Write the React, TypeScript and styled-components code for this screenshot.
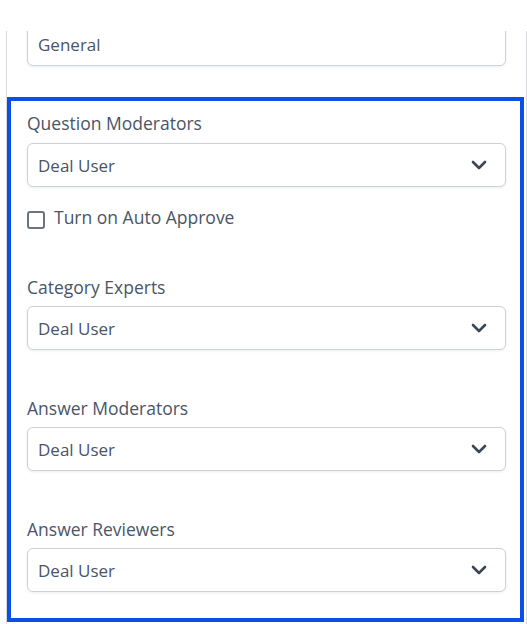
import React from 'react';
import styled, { createGlobalStyle } from 'styled-components';

const GlobalStyle = createGlobalStyle`
  html, body {
    margin: 0;
    padding: 0;
    background: #fff;
  }

  body {
    font-family: 'Open Sans', 'Noto Sans', sans-serif;
    color: #465163;
  }
`;

const TopSpacer = styled.div`
  height: 31px;
  background: #fff;
`;

const Panel = styled.div`
  margin-left: 6px;
  width: 521px;
  box-sizing: border-box;
  border-left: 1px solid #d6d9de;
  border-right: 1px solid #d6d9de;
  height: 593px;
  overflow: hidden;
`;

const ScrolledTop = styled.div`
  padding: 0 20px;
  margin-top: -9px;
  margin-bottom: 31px;
`;

const Field = styled.div`
  box-sizing: border-box;
  height: 44px;
  display: flex;
  align-items: center;
  justify-content: space-between;
  padding: 0 18px 0 10px;
  background: #fff;
  border: 1px solid #cdd2d8;
  border-radius: 6px;
  box-shadow: 0 1px 3px rgba(16, 24, 40, 0.08);
  font-size: 17px;
  color: #4a5567;
`;

const Highlight = styled.section`
  box-sizing: border-box;
  width: 517px;
  border: 4px solid #0a50e6;
  padding: 10px 14px 26px 16px;
  display: flex;
  flex-direction: column;
`;

const Group = styled.div<{ $gap?: number }>`
  display: flex;
  flex-direction: column;
  margin-bottom: ${(p) => p.$gap ?? 46}px;

  &:last-child {
    margin-bottom: 0;
  }
`;

const Label = styled.div<{ $space?: number }>`
  font-size: 17.5px;
  line-height: 24px;
  color: #4a5567;
  margin-bottom: ${(p) => p.$space ?? 7}px;
`;

const CheckRow = styled.label`
  display: flex;
  align-items: flex-start;
  gap: 9px;
  margin-top: 20px;
  font-size: 17.5px;
  line-height: 20px;
  color: #4a5567;
`;

const Box = styled.span`
  box-sizing: border-box;
  flex: none;
  width: 18px;
  height: 18px;
  margin-top: 4px;
  border: 2px solid #6b7280;
  border-radius: 3px;
  background: #fff;
`;

const Chevron = () => (
  <svg width="16" height="10" viewBox="0 0 16 10" fill="none">
    <path
      d="M2 2l6 6 6-6"
      stroke="#3b4656"
      strokeWidth="2.6"
      strokeLinecap="round"
      strokeLinejoin="round"
    />
  </svg>
);

const Select: React.FC<{ value: string }> = ({ value }) => (
  <Field>
    <span>{value}</span>
    <Chevron />
  </Field>
);

const groups = ['Category Experts', 'Answer Moderators', 'Answer Reviewers'];

const App: React.FC = () => {
  return (
    <>
      <GlobalStyle />
      <TopSpacer />
      <Panel>
        <ScrolledTop>
          <Field>General</Field>
        </ScrolledTop>
        <Highlight>
          <Group $gap={46}>
            <Label $space={8}>Question Moderators</Label>
            <Select value="Deal User" />
            <CheckRow>
              <Box />
              Turn on Auto Approve
            </CheckRow>
          </Group>
          {groups.map((g) => (
            <Group key={g}>
              <Label>{g}</Label>
              <Select value="Deal User" />
            </Group>
          ))}
        </Highlight>
      </Panel>
    </>
  );
};

export default App;
